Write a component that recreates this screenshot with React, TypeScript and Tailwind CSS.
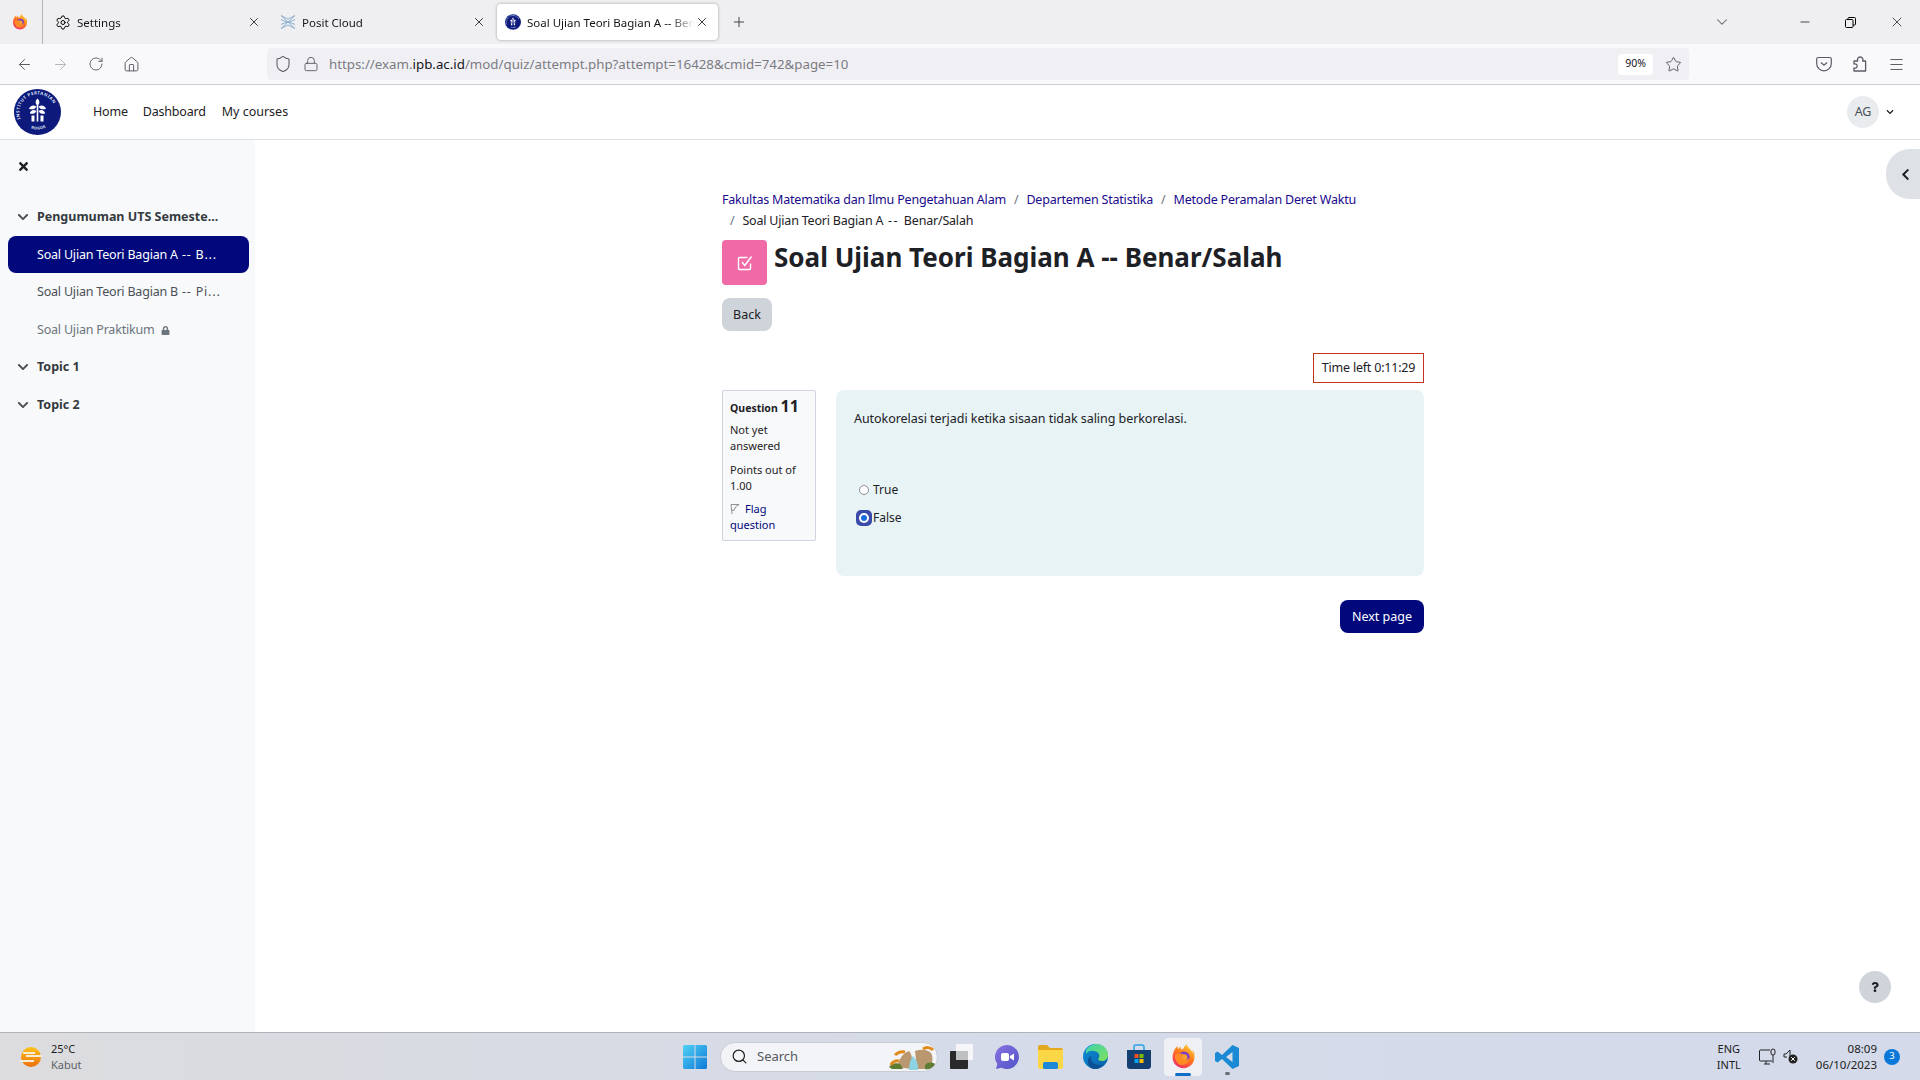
import { ArrowLeft, ArrowRight, RotateCw, House, Shield, Lock, Star, Menu, ChevronDown, Plus, Minus, X, Settings, Search } from 'lucide-react'
import { FaChevronDown, FaChevronLeft, FaLock, FaQuestion, FaTimes } from 'react-icons/fa'

function FirefoxIcon({ size = 16 }: { size?: number }) {
  return (
    <svg width={size} height={size} viewBox="0 0 32 32">
      <defs>
        <linearGradient id="ffa" x1="0.8" y1="0" x2="0.2" y2="1">
          <stop offset="0" stopColor="#ffd43b" />
          <stop offset="0.45" stopColor="#ff7a1a" />
          <stop offset="1" stopColor="#f0286f" />
        </linearGradient>
      </defs>
      <path d="M30 12c-.7-1.800-2.200-3.700-3.400-4.300 1 1.900 1.500 3.800 1.700 5-2-5-5.400-7-8.200-11.400-.2-.3-.3-.5-.4-.8-2.300 1.300-3.200 3.900-3.300 5.300-1.100.1-2.200.5-3.100 1.200-.2-.2-.5-.3-.7-.4-.3-1-.1-2 .3-3-1.600.8-2.900 2-3.800 3.100-.7-.8-.6-3.600-.6-4.200C7.200 3.400 6 5 5 6.700 3.200 9.700 2 13 2 17c0 7.800 6.300 14 14 14s14-6.200 14-14c0-1.800-.2-3.400 0-5z" fill="url(#ffa)" />
      <circle cx="16.500" cy="17" r="7.500" fill="#7b3fc4" />
      <circle cx="17" cy="17" r="4" fill="#f5a030" />
      <path d="M5 15c3-4 9-3 12-1-3 0-4 2-3 4 2 4 8 3 10-1 0 6-5 10-10 10S5 21 5 15z" fill="#ff8a24" />
    </svg>
  )
}

function IpbLogo({ w, h }: { w: number; h: number }) {
  return (
    <svg width={w} height={h} viewBox="0 0 47 46">
      <defs>
        <path id="ipbTop" d="M6.500 30A18.200 18.200 0 1 1 40.500 30" />
        <path id="ipbBottom" d="M10 35A19.500 19.500 0 0 0 37 35" />
      </defs>
      <ellipse cx="23.500" cy="23" rx="23.500" ry="23" fill="#0d1a7c" />
      <text fontFamily="Noto Sans, sans-serif" fontSize="4.300" fontWeight="700" fill="#dfe3f5" letterSpacing="0.5">
        <textPath href="#ipbTop">INSTITUT PERTANIAN</textPath>
      </text>
      <text fontFamily="Noto Sans, sans-serif" fontSize="3.800" fontWeight="700" fill="#dfe3f5" letterSpacing="0.3">
        <textPath href="#ipbBottom" startOffset="28%">BOGOR</textPath>
      </text>
      <g fill="#ffffff">
        <path d="M23.500 9.500c2.600 2.300 2.600 5 0 7.500-2.600-2.500-2.600-5.200 0-7.500z" />
        <path d="M22.300 17.500c-1 2.600-3.600 3.300-7.300 2.500.8-3.300 4.500-4.600 7.300-2.500zM24.700 17.500c1 2.600 3.600 3.300 7.300 2.500-.8-3.300-4.500-4.600-7.300-2.500z" />
        <path d="M22.300 22c-1 2.600-3.600 3.300-6.500 2.500.8-3.300 3.700-4.600 6.500-2.500zM24.700 22c1 2.600 3.600 3.300 6.500 2.500-.8-3.300-3.700-4.600-6.500-2.500z" />
        <path d="M22.700 16h1.600v16.500h-1.600zM17.500 26.500h3v6h-3zM26.500 26.500h3v6h-3z" />
      </g>
    </svg>
  )
}

function PositIcon() {
  return (
    <svg width="16" height="16" viewBox="0 0 16 16" fill="none" stroke="#8fb0cf" strokeWidth="1">
      <path d="M1 1.500l7 3.500 7-3.500M1 5.500l7 3 7-3M1 10.500l7-3 7 3M1 14.500l7-3.500 7 3.500M1 1.500l7 6.500-7 6.500M15 1.500l-7 6.500 7 6.500" />
    </svg>
  )
}

function Tab({ icon, title, active }: { icon: React.ReactNode; title: string; active?: boolean }) {
  return (
    <div className={active ? 'w-[221px] h-9 flex items-center pl-2 pr-[9px] bg-white rounded shadow-[0_0_3px_rgba(0,0,0,0.35)]' : 'w-[225px] h-9 flex items-center pl-2 pr-[11px]'}>
      <span className="w-4 h-4 flex items-center justify-center shrink-0">{icon}</span>
      <span className="ml-[6px] pt-[1px] text-[11.500px] text-[#15141a] whitespace-nowrap overflow-hidden flex-1 [mask-image:linear-gradient(to_right,black_85%,transparent)]">{title}</span>
      <X size={14} strokeWidth={1.4} className="text-[#15141a] shrink-0" />
    </div>
  )
}

function Browser() {
  return (
    <>
      {/* tab strip */}
      <div className="h-11 bg-[#efeff1] flex items-center shrink-0">
        <div className="w-[43px] h-full flex items-center pl-3 border-r border-[#b5b5b8]">
          <FirefoxIcon />
        </div>
        <div className="ml-1 flex items-center">
          <Tab icon={<Settings size={17} strokeWidth={1.5} />} title="Settings" />
          <Tab icon={<PositIcon />} title="Posit Cloud" />
          <Tab active icon={<IpbLogo w={16} h={16} />} title="Soal Ujian Teori Bagian A -- Benar/Salah" />
        </div>
        <Plus size={16} strokeWidth={1.4} className="ml-[13px] text-[#3a3a40]" />
        <div className="flex-1" />
        <ChevronDown size={18} strokeWidth={1.4} className="text-[#5b5b66]" />
        <div className="ml-[67px] flex items-center gap-[33px] pr-[15px]">
          <Minus size={14} strokeWidth={1.2} className="text-black" />
          <svg width="11" height="11" viewBox="0 0 11 11" fill="none" stroke="#000" strokeWidth="1"><rect x="0.500" y="2.500" width="7.500" height="8" rx="1" /><path d="M3 2.500V1.500a1 1 0 0 1 1-1h5.500a1 1 0 0 1 1 1V7a1 1 0 0 1-1 1H8" /></svg>
          <X size={16} strokeWidth={1} className="text-black" />
        </div>
      </div>
      {/* toolbar */}
      <div className="h-[41px] bg-[#f9f9fb] border-b border-[#cfcfd2] flex items-center shrink-0">
        <div className="w-[267px] flex items-center pl-4 gap-[19px] text-[#5b5b66]">
          <ArrowLeft size={17} strokeWidth={1.4} />
          <ArrowRight size={17} strokeWidth={1.4} className="text-[#b4b4ba]" />
          <RotateCw size={16} strokeWidth={1.4} />
          <House size={17} strokeWidth={1.4} />
        </div>
        <div className="w-[1422px] h-8 rounded bg-[#f0f0f4] flex items-center">
          <Shield size={18} strokeWidth={1.4} className="ml-[7px] text-[#5b5b66]" />
          <Lock size={16} strokeWidth={1.4} className="ml-[11px] text-[#5b5b66]" />
          <span className="ml-[10px] pt-[1px] text-[13.300px] text-[#7b7b83]">https://exam.<span className="text-[#15141a]">ipb.ac.id</span>/mod/quiz/attempt.php?attempt=16428&amp;cmid=742&amp;page=10</span>
          <div className="flex-1" />
          <span className="w-[35px] h-[21px] bg-white rounded flex items-center justify-center text-[10.500px] text-[#15141a]">90%</span>
          <Star size={17} strokeWidth={1.4} className="ml-[12px] mr-[4px] text-[#5b5b66]" />
          <span className="w-[3px]" />
        </div>
        <div className="flex-1 flex items-center justify-end gap-5 pr-[15px] text-[#5b5b66]">
          <svg width="16" height="16" viewBox="0 0 16 16" fill="none" stroke="currentColor" strokeWidth="1.200"><path d="M2.200 1.500h11.600a1.500 1.500 0 0 1 1.500 1.500v4.500a7.300 7.300 0 0 1-14.600 0V3a1.500 1.500 0 0 1 1.500-1.500z" /><path d="M5 6.500l3 2.800 3-2.800" /></svg>
          <svg width="16" height="16" viewBox="0 0 16 16" fill="none" stroke="currentColor" strokeWidth="1.300" strokeLinejoin="round"><path d="M2 5h3.800c-1-1.800.2-4 2.400-4s3.400 2.200 2.400 4h3v10H2v-3c1.800.6 3.200-.5 3.200-2S3.800 7.500 2 8z" /></svg>
          <Menu size={17} strokeWidth={1.4} />
        </div>
      </div>
    </>
  )
}

function SideSection({ label }: { label: string }) {
  return (
    <div className="h-[38px] flex items-center pl-[17px]">
      <FaChevronDown size={12} className="text-[#4a5056]" />
      <span className="ml-2 text-[12.500px] font-bold tracking-normal text-[#343a40] whitespace-nowrap">{label}</span>
    </div>
  )
}

function Sidebar() {
  return (
    <aside className="w-[255px] shrink-0 bg-[#f8f9fa] pt-5 text-[12.500px] tracking-[-0.2px]">
      <div className="pl-[17px] h-3 flex items-center text-[#1d2125]"><FaTimes size={13} /></div>
      <div className="mt-[26px]">
        <SideSection label="Pengumuman UTS Semeste..." />
        <div className="ml-2 w-[241px] h-[37px] pt-[1px] rounded-lg bg-[#00087c] flex items-center pl-[29px] text-white whitespace-nowrap">
          <span>Soal Ujian Teori Bagian A<span className="tracking-[0.8px]"> -- B...</span></span>
        </div>
        <div className="h-[38px] pt-[1px] flex items-center pl-[37px] text-[#4a5056] whitespace-nowrap">
          <span>Soal Ujian Teori Bagian B<span className="tracking-[0.8px]"> -- Pi...</span></span>
        </div>
        <div className="h-[37px] pt-[1px] flex items-center pl-[37px] text-[#6c757d] whitespace-nowrap">
          Soal Ujian Praktikum
          <FaLock size={9} className="ml-[7px] text-[#6c757d]" />
        </div>
        <SideSection label="Topic 1" />
        <SideSection label="Topic 2" />
      </div>
    </aside>
  )
}

function QuestionInfo() {
  return (
    <div className="w-[94px] h-[151px] shrink-0 bg-[#f8f9fa] border border-[#cfd4e0] rounded-[2px] pl-[7px] pr-1 pt-[5px] text-[11px] leading-4 text-[#1d2125]">
      <div className="font-bold leading-5 text-[10.500px]">Question <span className="text-[16px]">11</span></div>
      <div className="mt-1">Not yet answered</div>
      <div className="mt-2">Points out of 1.00</div>
      <div className="mt-[7px] text-[#00087c]">
        <svg width="10" height="12" viewBox="0 0 10 12" className="inline mr-1 -mt-[2px]" fill="none" stroke="#777" strokeWidth="0.800"><path d="M2 11L1 1.500h8L5.500 4 4 7.500 1.600 7" /></svg>
        <span className="ml-[1px]">Flag</span> question
      </div>
    </div>
  )
}

function Answer() {
  return (
    <div className="flex-1 h-[186px] bg-[#e7f3f5] rounded-lg pl-[18px] pt-[19px] text-[12.500px] text-[#1d2125]">
      <div className="leading-5 tracking-[-0.05px]">Autokorelasi terjadi ketika sisaan tidak saling berkorelasi.</div>
      <div className="mt-[47px] flex items-center h-7 pl-1">
        <span className="w-[10px] h-[10px] rounded-full bg-white border border-[#8e8e95] ml-[1px] mr-[3px]" />
        <span className="ml-[1px] text-[12px]">True</span>
      </div>
      <div className="flex items-center h-7">
        <span className="w-4 h-4 rounded-[5px] bg-[#3a4aa8] flex items-center justify-center ml-[2px]">
          <span className="w-[10px] h-[10px] rounded-full bg-white flex items-center justify-center"><span className="w-[6px] h-[6px] rounded-full bg-[#1a6de0]" /></span>
        </span>
        <span className="ml-[1px] text-[12px]">False</span>
      </div>
    </div>
  )
}

function Main() {
  return (
    <main className="flex-1 bg-white relative">
      <div className="w-[702px] ml-[467px] pt-[49px]">
        <div className="text-[12.500px] leading-[21px] tracking-[-0.2px] text-[#1d2125]">
          <div className="whitespace-nowrap">
            <span className="text-[#1a0a8c]">Fakultas Matematika dan Ilmu Pengetahuan Alam</span>
            <span className="mx-2 text-[#6c757d]">/</span>
            <span className="text-[#1a0a8c]">Departemen Statistika</span>
            <span className="mx-2 text-[#6c757d]">/</span>
            <span className="text-[#1a0a8c]">Metode Peramalan Deret Waktu</span>
          </div>
          <div className="pl-2 whitespace-nowrap"><span className="mr-2 text-[#6c757d]">/</span>Soal Ujian Teori Bagian A<span className="tracking-[1.500px]"> -- </span>Benar/Salah</div>
        </div>
        <div className="mt-[9px] flex items-start">
          <span className="w-[45px] h-[45px] rounded-[4px] bg-[#ef6aa6] flex items-center justify-center">
            <svg width="16" height="16" viewBox="0 0 16 16" fill="none" stroke="#ffffff" strokeWidth="1.400">
              <path d="M13.500 8.500v5a1 1 0 0 1-1 1h-10a1 1 0 0 1-1-1v-10a1 1 0 0 1 1-1h8" />
              <path d="M5 7l2.800 3.500L14.500 1.500" />
            </svg>
          </span>
          <h1 className="ml-[7px] text-[26px] leading-[34px] font-bold text-[#1d2125] whitespace-nowrap">Soal Ujian Teori Bagian A -- Benar/Salah</h1>
        </div>
        <button className="mt-[13px] w-[50px] h-[33px] pt-[1px] rounded-lg bg-[#ced4da] text-[12.500px] text-[#1d2125]">Back</button>
        <div className="mt-[22px] flex justify-end">
          <div className="h-[30px] w-[111px] pt-[1px] border border-[#c5301f] flex items-center justify-center text-[12.500px] tracking-[-0.2px] text-[#1d2125] whitespace-nowrap">Time left 0:11:29</div>
        </div>
        <div className="mt-[7px] flex gap-5">
          <QuestionInfo />
          <Answer />
        </div>
        <div className="mt-6 flex justify-end">
          <button className="w-[84px] h-[33px] pt-[1px] rounded-lg bg-[#00087c] text-[12.500px] text-white">Next page</button>
        </div>
      </div>
      <div className="absolute right-0 top-[9px] w-[34px] h-[50px] bg-[#dee2e6] rounded-l-[24px] flex items-center justify-center pl-1 text-[#1d2125]"><FaChevronLeft size={13} /></div>
      <div className="absolute left-[1604px] top-[831px] w-8 h-8 rounded-full bg-[#ced4da] flex items-center justify-center text-[#1d2125]"><FaQuestion size={10} /></div>
    </main>
  )
}

function Taskbar() {
  return (
    <footer className="h-12 shrink-0 relative flex items-center border-t border-[#b0b3ba] bg-gradient-to-r from-[#dcdcde] via-[#d5dbe8] to-[#d4daea]">
      <div className="w-[680px] flex items-center pl-5">
        <svg width="22" height="22" viewBox="0 0 22 22">
          <defs><linearGradient id="sun" x1="0" y1="0" x2="0" y2="1"><stop offset="0" stopColor="#ffc21a" /><stop offset="1" stopColor="#ec6f0c" /></linearGradient></defs>
          <circle cx="11" cy="11" r="10" fill="url(#sun)" />
          <path d="M3 7h12M6 10h17M-1 15h15" stroke="#f3ecd8" strokeWidth="1.800" />
        </svg>
        <div className="ml-[9px] text-[11px] leading-4">
          <div className="text-[#1c1c1c]">25°C</div>
          <div className="text-[#5c5f66]">Kabut</div>
        </div>
      </div>
      <div className="flex items-center">
        <svg width="24" height="24" viewBox="0 0 24 24" className="ml-[3px]">
          <defs><linearGradient id="win" x1="0" y1="0" x2="1" y2="1"><stop offset="0" stopColor="#4fd2f7" /><stop offset="1" stopColor="#0f78d6" /></linearGradient></defs>
          <path d="M0 1.500A1.500 1.500 0 0 1 1.500 0H11.500V11.500H0zM12.500 0H22.500A1.500 1.500 0 0 1 24 1.500V11.500H12.500zM0 12.500H11.500V24H1.500A1.500 1.500 0 0 1 0 22.500zM12.500 12.500H24V22.500A1.500 1.500 0 0 1 22.500 24H12.500z" fill="url(#win)" />
        </svg>
        <div className="ml-[13px] w-[218px] h-[30px] rounded-full bg-[#f3f4f7] border border-[#c9ccd4] flex items-center pl-[10px] relative">
          <Search size={17} strokeWidth={1.7} className="text-[#1c1c1c]" />
          <span className="ml-[9px] text-[13px] text-[#55585f]">Search</span>
          <svg width="48" height="28" viewBox="0 0 48 28" className="absolute right-0 top-0">
            <path d="M8 24c2-8 6-14 12-16 4 4 4 14 2 18zM26 8c6-2 12-2 16 2 3 5 1 12-2 16H28z" fill="#b9986f" />
            <path d="M0 24c3-4 8-5 12-2l2 4H3zM36 22c3-3 7-3 10-1-2 4-6 6-10 5z" fill="#5e7d33" />
            <path d="M2 22c1-3 5-5 8-4M6 12c3-3 6-4 10-3M34 6c3-2 7-2 10 1" stroke="#e08a1c" strokeWidth="3" fill="none" />
            <path d="M20 27c0-6 2-12 4-14 2 2 6 8 5 14z" fill="#8cd3e3" />
          </svg>
        </div>
        <svg width="26" height="26" viewBox="0 0 26 26" className="ml-3">
          <rect x="6" y="0" width="17" height="16" rx="1" fill="#f6f6f8" />
          <rect x="0" y="7" width="18" height="18" rx="1" fill="#2a2a2c" />
          <rect x="6" y="7" width="12" height="9" fill="#bfc0c3" />
        </svg>
        <svg width="24" height="24" viewBox="0 0 24 24" className="ml-[19px]">
          <defs><linearGradient id="chat" x1="0" y1="0" x2="1" y2="1"><stop offset="0" stopColor="#8a6fe0" /><stop offset="1" stopColor="#4f56c8" /></linearGradient></defs>
          <path d="M12 0a12 12 0 1 1-5.500 22.700L1 24l1.300-5A12 12 0 0 1 12 0z" fill="url(#chat)" />
          <rect x="6" y="8" width="8" height="8" rx="2" fill="#fff" />
          <path d="M15 11l4-2.500v7L15 13z" fill="#fff" />
        </svg>
        <svg width="25" height="24" viewBox="0 0 25 24" className="ml-[19px]">
          <path d="M0 2a2 2 0 0 1 2-2h7l3 3h11a2 2 0 0 1 2 2v4H0z" fill="#e3a81c" />
          <path d="M0 5h25v17a2 2 0 0 1-2 2H2a2 2 0 0 1-2-2z" fill="#fbd647" />
          <rect x="5" y="17" width="15" height="7" rx="1.500" fill="#1e88d8" />
        </svg>
        <svg width="25" height="25" viewBox="0 0 25 25" className="ml-5">
          <defs>
            <linearGradient id="edge1" x1="0" y1="0" x2="1" y2="1"><stop offset="0" stopColor="#3ed2b0" /><stop offset="1" stopColor="#7fe05a" /></linearGradient>
            <linearGradient id="edge2" x1="0" y1="0" x2="1" y2="1"><stop offset="0" stopColor="#0a8fd8" /><stop offset="1" stopColor="#0c5ea8" /></linearGradient>
          </defs>
          <circle cx="12.500" cy="12.500" r="12.500" fill="url(#edge2)" />
          <path d="M3 6C6 1 11 0 14 0c6 0 11 5 11 11 0 4-3 6-6 6-2 0-4-1-4-2 2-2 2-6-2-7.500C9 6 5 7 3 10z" fill="url(#edge1)" />
          <path d="M8 14c0 4 4 7 8 7 1 0 3-.5 4-1-2 3-5 5-8 5-5 0-8-5-7-9 .5-2 2-4 3-4z" fill="#0b4f94" />
        </svg>
        <svg width="24" height="25" viewBox="0 0 24 25" className="ml-[19px]">
          <path d="M7 6V3a2 2 0 0 1 2-2h6a2 2 0 0 1 2 2v3" fill="none" stroke="#2aa3e8" strokeWidth="1.500" />
          <path d="M0 6h24v16a3 3 0 0 1-3 3H3a3 3 0 0 1-3-3z" fill="#123e72" />
          <rect x="7.500" y="10" width="4" height="4" fill="#f25022" />
          <rect x="12.500" y="10" width="4" height="4" fill="#7fba00" />
          <rect x="7.500" y="15" width="4" height="4" fill="#00a4ef" />
          <rect x="12.500" y="15" width="4" height="4" fill="#ffb900" />
        </svg>
        <div className="ml-[13px] w-[38px] h-[38px] rounded bg-[#eef0f5] relative flex items-center justify-center">
          <FirefoxIcon size={25} />
          <span className="absolute bottom-0 left-[11px] w-4 h-[3px] rounded-full bg-[#0f6fc6]" />
        </div>
        <div className="ml-[13px] relative w-6 h-6">
          <svg width="24" height="24" viewBox="0 0 24 24">
            <path d="M17.500 0L24 3v18l-6.500 3L7 14l-4.500 3.500L0 16V8l2.500-1.500L7 10zM17.500 7L11 12l6.500 5z" fill="#1a8ad4" />
          </svg>
          <span className="absolute -bottom-[6px] left-[10px] w-[5px] h-[3px] rounded-full bg-[#6b6e75]" />
        </div>
      </div>
      <div className="flex-1 flex items-center justify-end pr-5 text-[#1c1c1c]">
        <div className="text-[11px] leading-4 text-center">ENG<br />INTL</div>
        <svg width="17" height="17" viewBox="0 0 17 17" className="ml-[18px]" fill="none" stroke="#222" strokeWidth="1"><path d="M11 2H1.500a1 1 0 0 0-1 1v9a1 1 0 0 0 1 1H13M5 16h6M7 13v3" /><rect x="12" y="1" width="4" height="6" rx="2" /><path d="M14 7v8" /></svg>
        <svg width="15" height="15" viewBox="0 0 15 15" className="ml-[7px]"><path d="M1 5h2l4-4v8" fill="none" stroke="#222" strokeWidth="1" /><path d="M1 5v3h3" fill="none" stroke="#222" strokeWidth="1" /><circle cx="10" cy="10" r="4.500" fill="#222" /><path d="M8.200 8.200l3.600 3.600M11.800 8.200l-3.600 3.600" stroke="#fff" strokeWidth="1" /></svg>
        <div className="ml-[18px] text-[11.500px] leading-4 text-right">08:09<br />06/10/2023</div>
        <span className="ml-[7px] w-4 h-4 rounded-full bg-[#0a78d8] text-white text-[9.500px] flex items-center justify-center">3</span>
      </div>
    </footer>
  )
}

export default function App() {
  return (
    <div className="w-[1920px] h-[1080px] overflow-hidden flex flex-col font-['Noto_Sans',sans-serif]">
      <Browser />
      {/* Moodle navbar */}
      <nav className="h-[55px] shrink-0 bg-white border-b border-[#dee2e6] flex items-center pl-[14px] text-[12.500px] tracking-[-0.2px] text-[#1d2125]">
        <IpbLogo w={47} h={46} />
        <span className="ml-8 pt-[1px]">Home</span>
        <span className="ml-[15px] pt-[1px]">Dashboard</span>
        <span className="ml-4 pt-[1px] tracking-normal">My courses</span>
        <div className="flex-1" />
        <span className="w-8 h-8 rounded-full bg-[#e9ecef] flex items-center justify-center text-[#495057]">AG</span>
        <FaChevronDown size={8} className="ml-[7px] mr-[26px] text-[#1d2125]" />
      </nav>
      <div className="flex-1 flex min-h-0">
        <Sidebar />
        <Main />
      </div>
      <Taskbar />
    </div>
  )
}
